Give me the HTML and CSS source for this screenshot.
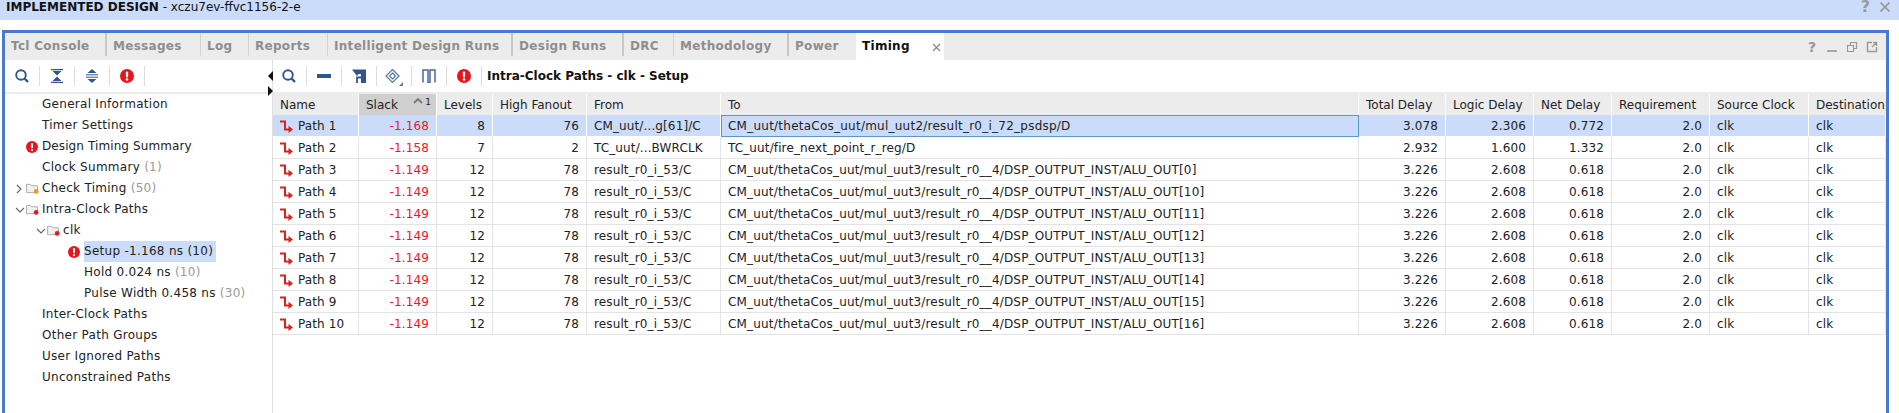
FILE: index.html

```html
<!DOCTYPE html>
<html lang="en">
<head>
    <meta charset="UTF-8">
    <title>Timing</title>
    <link rel="stylesheet" href="styles.css">
</head>
<body>
    <svg class="defs" width="0" height="0">
        <symbol id="err" viewBox="0 0 16 16"><circle cx="8" cy="8" r="8" fill="#e8161c"/><rect x="6.700" y="2.800" width="2.600" height="6.800" rx="1" fill="#fff"/><circle cx="8" cy="12" r="1.500" fill="#fff"/></symbol>
        <symbol id="folder" viewBox="0 0 14 12"><path d="M.5 1.500H5L6 3H12.500V10.500H.5Z" fill="#f1f1f1" stroke="#a9a9a9"/></symbol>
        <symbol id="mag" viewBox="0 0 14 14"><circle cx="6" cy="6" r="4.800" fill="none" stroke="#34558b" stroke-width="1.900"/><path d="M9.500 9.500L13 13" stroke="#34558b" stroke-width="2.400"/></symbol>
        <symbol id="patharrow" viewBox="0 0 13 13"><path d="M0 1.500H5V9.500H9" fill="none" stroke="#d9231f" stroke-width="2"/><path d="M8.500 5.800L13 9.500L8.500 13Z" fill="#d9231f"/></symbol>
    </svg>

    <div class="banner">
        <div><b>IMPLEMENTED DESIGN</b> - xczu7ev-ffvc1156-2-e</div>
        <div class="banner-tools">
            <span class="help">?</span>
            <svg width="10" height="10" viewBox="0 0 10 10"><path d="M.5 .5L9.500 9.500M9.500 .5L.5 9.500" stroke="#999" stroke-width="1.600"/></svg>
        </div>
    </div>

    <div class="panel">
        <div class="tabs">
            <div class="tab sep-thick">Tcl Console</div>
            <div class="tab">Messages</div>
            <div class="tab">Log</div>
            <div class="tab">Reports</div>
            <div class="tab sep-thick">Intelligent Design Runs</div>
            <div class="tab sep-thick">Design Runs</div>
            <div class="tab">DRC</div>
            <div class="tab sep-thick">Methodology</div>
            <div class="tab no-sep">Power</div>
            <div class="tab active">Timing <svg class="tab-close" width="9" height="9" viewBox="0 0 9 9"><path d="M1 1L8 8M8 1L1 8" stroke="#888" stroke-width="1.200"/></svg></div>
            <div class="tab-tools">
                <span class="help small">?</span>
                <svg width="12" height="12" viewBox="0 0 12 12"><path d="M1 10H11" stroke="#999" stroke-width="1.600"/></svg>
                <svg width="12" height="12" viewBox="0 0 12 12"><path d="M1.500 4.500H7.500V10.500H1.500ZM4.500 4.500V1.500H10.500V7.500H7.500" fill="none" stroke="#999" stroke-width="1.200"/></svg>
                <svg width="12" height="12" viewBox="0 0 12 12"><path d="M6 1.500H1.500V10.500H10.500V6M7 1.500H10.500V5M10.500 1.500L6 6" fill="none" stroke="#999" stroke-width="1.400"/></svg>
            </div>
        </div>

        <div class="content">
            <div class="left">
                <div class="toolbar">
                    <span class="tool"><svg class="ico14"><use href="#mag"/></svg></span>
                    <span class="tool"><svg width="12" height="14" viewBox="0 0 12 14"><path d="M0 .6H12M0 13.400H12" stroke="#34558b" stroke-width="1.300"/><path d="M1.500 2H10.500L6 6.500ZM1.500 12H10.500L6 7.500Z" fill="#34558b"/></svg></span>
                    <span class="tool"><svg width="12" height="14" viewBox="0 0 12 14"><path d="M6 0L10.500 4H1.500ZM6 14L10.500 10H1.500Z" fill="#34558b"/><path d="M0 5.800H12M0 8.200H12" stroke="#34558b" stroke-width="1"/></svg></span>
                    <span class="tool"><svg class="ico14"><use href="#err"/></svg></span>
                </div>
                <div class="tree">
                    <div class="node lvl0"><span class="lab">General Information</span></div>
                    <div class="node lvl0"><span class="lab">Timer Settings</span></div>
                    <div class="node lvl0"><svg class="node-icon"><use href="#err"/></svg><span class="lab tight">Design Timing Summary</span></div>
                    <div class="node lvl0"><span class="lab">Clock Summary <i>(1)</i></span></div>
                    <div class="node lvl0">
                        <svg class="arrow" width="8" height="10" viewBox="0 0 8 10"><path d="M2 1L6 5L2 9" fill="none" stroke="#666" stroke-width="1.100"/></svg>
                        <svg class="folder" viewBox="0 0 14 12"><use href="#folder"/><circle cx="11" cy="9.200" r="2.600" fill="#ee9a1c"/></svg>
                        <span class="lab">Check Timing <i>(50)</i></span>
                    </div>
                    <div class="node lvl0">
                        <svg class="arrow" width="10" height="8" viewBox="0 0 10 8"><path d="M1 2L5 6L9 2" fill="none" stroke="#666" stroke-width="1.100"/></svg>
                        <svg class="folder" viewBox="0 0 14 12"><use href="#folder"/><circle cx="11" cy="9.200" r="2.600" fill="#e01b1b"/></svg>
                        <span class="lab">Intra-Clock Paths</span>
                    </div>
                    <div class="node lvl1">
                        <svg class="arrow" width="10" height="8" viewBox="0 0 10 8"><path d="M1 2L5 6L9 2" fill="none" stroke="#666" stroke-width="1.100"/></svg>
                        <svg class="folder" viewBox="0 0 14 12"><use href="#folder"/><circle cx="11" cy="9.200" r="2.600" fill="#e01b1b"/></svg>
                        <span class="lab">clk</span>
                    </div>
                    <div class="node lvl2"><svg class="node-icon"><use href="#err"/></svg><span class="lab selected">Setup -1.168 ns (10)</span></div>
                    <div class="node lvl2"><span class="lab">Hold 0.024 ns <i>(10)</i></span></div>
                    <div class="node lvl2"><span class="lab">Pulse Width 0.458 ns <i>(30)</i></span></div>
                    <div class="node lvl0"><span class="lab">Inter-Clock Paths</span></div>
                    <div class="node lvl0"><span class="lab">Other Path Groups</span></div>
                    <div class="node lvl0"><span class="lab">User Ignored Paths</span></div>
                    <div class="node lvl0"><span class="lab">Unconstrained Paths</span></div>
                </div>
                <div class="splitter"><span class="tri-left"></span><span class="tri-right"></span></div>
            </div>

            <div class="right">
                <div class="toolbar">
                    <span class="tool"><svg class="ico14"><use href="#mag"/></svg></span>
                    <span class="tool"><svg width="14" height="4" viewBox="0 0 14 4"><rect width="14" height="4" fill="#34558b"/></svg></span>
                    <span class="tool"><svg width="14" height="14" viewBox="0 0 14 14"><path d="M0 .5H14V14H9V5H6.500L5 7L0 .5Z" fill="#34558b"/><path d="M9 8.500H5V14" fill="none" stroke="#34558b" stroke-width="1.800"/></svg></span>
                    <span class="tool"><svg width="20" height="20" viewBox="0 0 20 20"><path d="M8.500 3.500L15 10L8.500 16.500L2 10Z" fill="none" stroke="#5575a8" stroke-width="1.200"/><path d="M8.500 7L11.500 10L8.500 13L5.500 10Z" fill="none" stroke="#5575a8" stroke-width="1.200"/><path d="M19 16V20H15Z" fill="#777"/></svg></span>
                    <span class="tool"><svg width="14" height="14" viewBox="0 0 14 14"><path d="M1 13.500V1H6V13.500H8V1H13V13.500" fill="none" stroke="#4a6aa0" stroke-width="1.500"/></svg></span>
                    <span class="tool"><svg class="ico14"><use href="#err"/></svg></span>
                    <b class="title">Intra-Clock Paths - clk - Setup</b>
                </div>
                <table class="paths">
                    <colgroup>
                        <col class="c-name"><col class="c-slack"><col class="c-levels"><col class="c-fanout"><col class="c-from"><col class="c-to"><col class="c-total"><col class="c-logic"><col class="c-net"><col class="c-req"><col class="c-src"><col class="c-dst">
                    </colgroup>
                    <thead>
                        <tr>
                            <th>Name</th>
                            <th class="sorted">Slack<span class="sort"><svg width="10" height="6" viewBox="0 0 10 6"><path d="M1 5L5 1L9 5" fill="none" stroke="#777" stroke-width="1.800"/></svg><sup>1</sup></span></th>
                            <th>Levels</th><th>High Fanout</th><th>From</th><th>To</th><th>Total Delay</th><th>Logic Delay</th><th>Net Delay</th><th>Requirement</th><th>Source Clock</th><th class="last">Destination</th>
                        </tr>
                    </thead>
                    <tbody>
                        <tr class="sel"><td><svg class="path-arrow"><use href="#patharrow"/></svg>Path 1</td><td class="num slack">-1.168</td><td class="num">8</td><td class="num">76</td><td>CM_uut/...g[61]/C</td><td class="focus">CM_uut/thetaCos_uut/mul_uut2/result_r0_i_72_psdsp/D</td><td class="num">3.078</td><td class="num">2.306</td><td class="num">0.772</td><td class="num">2.0</td><td>clk</td><td>clk</td></tr>
                        <tr><td><svg class="path-arrow"><use href="#patharrow"/></svg>Path 2</td><td class="num slack">-1.158</td><td class="num">7</td><td class="num">2</td><td>TC_uut/...BWRCLK</td><td>TC_uut/fire_next_point_r_reg/D</td><td class="num">2.932</td><td class="num">1.600</td><td class="num">1.332</td><td class="num">2.0</td><td>clk</td><td>clk</td></tr>
                        <tr><td><svg class="path-arrow"><use href="#patharrow"/></svg>Path 3</td><td class="num slack">-1.149</td><td class="num">12</td><td class="num">78</td><td>result_r0_i_53/C</td><td class="long">CM_uut/thetaCos_uut/mul_uut3/result_r0__4/DSP_OUTPUT_INST/ALU_OUT[0]</td><td class="num">3.226</td><td class="num">2.608</td><td class="num">0.618</td><td class="num">2.0</td><td>clk</td><td>clk</td></tr>
                        <tr><td><svg class="path-arrow"><use href="#patharrow"/></svg>Path 4</td><td class="num slack">-1.149</td><td class="num">12</td><td class="num">78</td><td>result_r0_i_53/C</td><td class="long">CM_uut/thetaCos_uut/mul_uut3/result_r0__4/DSP_OUTPUT_INST/ALU_OUT[10]</td><td class="num">3.226</td><td class="num">2.608</td><td class="num">0.618</td><td class="num">2.0</td><td>clk</td><td>clk</td></tr>
                        <tr><td><svg class="path-arrow"><use href="#patharrow"/></svg>Path 5</td><td class="num slack">-1.149</td><td class="num">12</td><td class="num">78</td><td>result_r0_i_53/C</td><td class="long">CM_uut/thetaCos_uut/mul_uut3/result_r0__4/DSP_OUTPUT_INST/ALU_OUT[11]</td><td class="num">3.226</td><td class="num">2.608</td><td class="num">0.618</td><td class="num">2.0</td><td>clk</td><td>clk</td></tr>
                        <tr><td><svg class="path-arrow"><use href="#patharrow"/></svg>Path 6</td><td class="num slack">-1.149</td><td class="num">12</td><td class="num">78</td><td>result_r0_i_53/C</td><td class="long">CM_uut/thetaCos_uut/mul_uut3/result_r0__4/DSP_OUTPUT_INST/ALU_OUT[12]</td><td class="num">3.226</td><td class="num">2.608</td><td class="num">0.618</td><td class="num">2.0</td><td>clk</td><td>clk</td></tr>
                        <tr><td><svg class="path-arrow"><use href="#patharrow"/></svg>Path 7</td><td class="num slack">-1.149</td><td class="num">12</td><td class="num">78</td><td>result_r0_i_53/C</td><td class="long">CM_uut/thetaCos_uut/mul_uut3/result_r0__4/DSP_OUTPUT_INST/ALU_OUT[13]</td><td class="num">3.226</td><td class="num">2.608</td><td class="num">0.618</td><td class="num">2.0</td><td>clk</td><td>clk</td></tr>
                        <tr><td><svg class="path-arrow"><use href="#patharrow"/></svg>Path 8</td><td class="num slack">-1.149</td><td class="num">12</td><td class="num">78</td><td>result_r0_i_53/C</td><td class="long">CM_uut/thetaCos_uut/mul_uut3/result_r0__4/DSP_OUTPUT_INST/ALU_OUT[14]</td><td class="num">3.226</td><td class="num">2.608</td><td class="num">0.618</td><td class="num">2.0</td><td>clk</td><td>clk</td></tr>
                        <tr><td><svg class="path-arrow"><use href="#patharrow"/></svg>Path 9</td><td class="num slack">-1.149</td><td class="num">12</td><td class="num">78</td><td>result_r0_i_53/C</td><td class="long">CM_uut/thetaCos_uut/mul_uut3/result_r0__4/DSP_OUTPUT_INST/ALU_OUT[15]</td><td class="num">3.226</td><td class="num">2.608</td><td class="num">0.618</td><td class="num">2.0</td><td>clk</td><td>clk</td></tr>
                        <tr><td><svg class="path-arrow"><use href="#patharrow"/></svg>Path 10</td><td class="num slack">-1.149</td><td class="num">12</td><td class="num">78</td><td>result_r0_i_53/C</td><td class="long">CM_uut/thetaCos_uut/mul_uut3/result_r0__4/DSP_OUTPUT_INST/ALU_OUT[16]</td><td class="num">3.226</td><td class="num">2.608</td><td class="num">0.618</td><td class="num">2.0</td><td>clk</td><td>clk</td></tr>
                    </tbody>
                </table>
            </div>
        </div>
    </div>
</body>
</html>
```

FILE: styles.css

```css
* {
    box-sizing: border-box;
}
html, body {
    height: 100%;
}
body {
    margin: 0;
    font-family: "DejaVu Sans", sans-serif;
    font-size: 12px;
    color: #222;
    background-color: #fff;
    overflow: hidden;
}
.defs {
    position: absolute;
}
.banner {
    height: 20px;
    margin-bottom: 10px;
    padding: 0 9px 7px 6px;
    background-color: #cbdcfb;
    display: flex;
    align-items: center;
    justify-content: space-between;
    color: #111;
}
.banner-tools {
    display: flex;
    align-items: center;
    gap: 10px;
}
.help {
    color: #999;
    font-weight: bold;
    font-size: 16px;
    line-height: 16px;
}
.help.small {
    font-size: 14px;
    width: 12px;
    text-align: center;
}
.panel {
    margin: 0 10px 0 2px;
    height: 383px;
    border: 3px solid #4a7acb;
    border-bottom: none;
    display: flex;
    flex-direction: column;
}
.tabs {
    height: 27px;
    background-color: #ececec;
    display: flex;
    align-items: stretch;
    flex: none;
}
.tab {
    padding: 0 0 2px 6px;
    display: flex;
    align-items: center;
    font-weight: bold;
    color: #8e8e8e;
    position: relative;
    letter-spacing: 0.3px;
    white-space: nowrap;
}
.tab:nth-child(1) { width: 102px; }
.tab:nth-child(2) { width: 94px; }
.tab:nth-child(3) { width: 48px; }
.tab:nth-child(4) { width: 79px; }
.tab:nth-child(5) { width: 185px; }
.tab:nth-child(6) { width: 111px; }
.tab:nth-child(7) { width: 50px; }
.tab:nth-child(8) { width: 115px; }
.tab:nth-child(9) { width: 67px; }
.tab:nth-child(10) { width: 88px; }
.tab::after {
    content: "";
    position: absolute;
    right: 0;
    top: 0;
    bottom: 4px;
    border-right: 1px solid #d4d4d4;
}
.tab.sep-thick::after {
    border-right: 2px solid #c8c8c8;
}
.tab.no-sep::after {
    display: none;
}
.tab.active {
    background-color: #fff;
    color: #111;
}
.tab.active::after {
    display: none;
}
.tab-close {
    margin: 3px 0 0 22px;
}
.tab-tools {
    margin-left: auto;
    display: flex;
    align-items: center;
    gap: 8px;
    padding-right: 8px;
}
.content {
    flex: 1;
    display: flex;
    min-height: 0;
}
.left {
    width: 268px;
    flex: none;
    position: relative;
    border-right: 1px solid #e0e0e0;
    display: flex;
    flex-direction: column;
}
.right {
    flex: 1;
    min-width: 0;
    display: flex;
    flex-direction: column;
    overflow: hidden;
}
.toolbar {
    height: 34px;
    flex: none;
    display: flex;
    align-items: center;
    border-bottom: 2px solid #ececec;
}
.right .toolbar {
    margin-left: -1px;
}
.tool {
    width: 35px;
    height: 20px;
    display: flex;
    align-items: center;
    justify-content: center;
    border-right: 1px solid #dcdcdc;
}
.ico14 {
    width: 14px;
    height: 14px;
}
.title {
    margin-left: 5px;
    color: #111;
}
.node {
    height: 21px;
    display: flex;
    align-items: center;
    position: relative;
}
.lvl0 {
    padding-left: 37px;
}
.lvl1 {
    padding-left: 58px;
}
.lvl2 {
    padding-left: 79px;
}
.lab {
    white-space: nowrap;
    line-height: 21px;
    padding-right: 3px;
    letter-spacing: 0.28px;
}
.lab.tight {
    letter-spacing: 0.1px;
}
.lab i {
    font-style: normal;
    color: #999;
}
.lab.selected {
    background-color: #cbdcfb;
}
.node-icon {
    position: absolute;
    width: 12px;
    height: 12px;
    margin-left: -16px;
}
.arrow {
    position: absolute;
    margin-left: -27px;
}
.folder {
    position: absolute;
    width: 13px;
    height: 11px;
    margin-left: -16px;
}
.splitter {
    position: absolute;
    right: -1px;
    top: 11px;
    display: flex;
    flex-direction: column;
    gap: 5px;
}
.tri-left, .tri-right {
    width: 0;
    height: 0;
    border-top: 5px solid transparent;
    border-bottom: 5px solid transparent;
}
.tri-left {
    border-right: 5px solid #111;
}
.tri-right {
    border-left: 5px solid #111;
}
.paths {
    border-collapse: separate;
    border-spacing: 0;
    table-layout: fixed;
    width: 1613px;
}
.c-name { width: 86px; }
.c-slack { width: 78px; }
.c-levels { width: 56px; }
.c-fanout { width: 94px; }
.c-from { width: 134px; }
.c-to { width: 638px; }
.c-total { width: 87px; }
.c-logic { width: 88px; }
.c-net { width: 78px; }
.c-req { width: 98px; }
.c-src { width: 99px; }
.c-dst { width: 77px; }
.paths th {
    height: 21px;
    padding: 0 7px;
    background-color: #ececec;
    border-right: 1px solid #fff;
    font-weight: normal;
    text-align: left;
    white-space: nowrap;
    overflow: hidden;
    color: #222;
}
.paths th.last {
    padding-right: 0;
    border-right: none;
}
.paths th.sorted {
    background-color: #cfcfcf;
    position: relative;
}
.sort {
    position: absolute;
    right: 5px;
    top: 4px;
    display: flex;
    gap: 2px;
}
.sort sup {
    font-size: 9px;
    line-height: 9px;
}
.paths td {
    height: 22px;
    padding: 0 7px;
    border-right: 1px solid #e4e4e4;
    border-bottom: 1px solid #e4e4e4;
    white-space: nowrap;
    overflow: hidden;
    letter-spacing: 0.12px;
}
.paths td.num {
    text-align: right;
}
.paths td.slack {
    color: #f0142d;
}
.paths td.long {
    letter-spacing: 0.17px;
}
.path-arrow {
    width: 13px;
    height: 13px;
    margin-right: 5px;
    vertical-align: -3px;
}
.paths tr.sel td {
    background-color: #cbdcfb;
    border-right-color: #fff;
    border-bottom-color: #fff;
}
.paths tr.sel td.focus {
    border: 1px solid #5b95c9;
    padding-left: 6px;
    letter-spacing: 0.24px;
}
```
